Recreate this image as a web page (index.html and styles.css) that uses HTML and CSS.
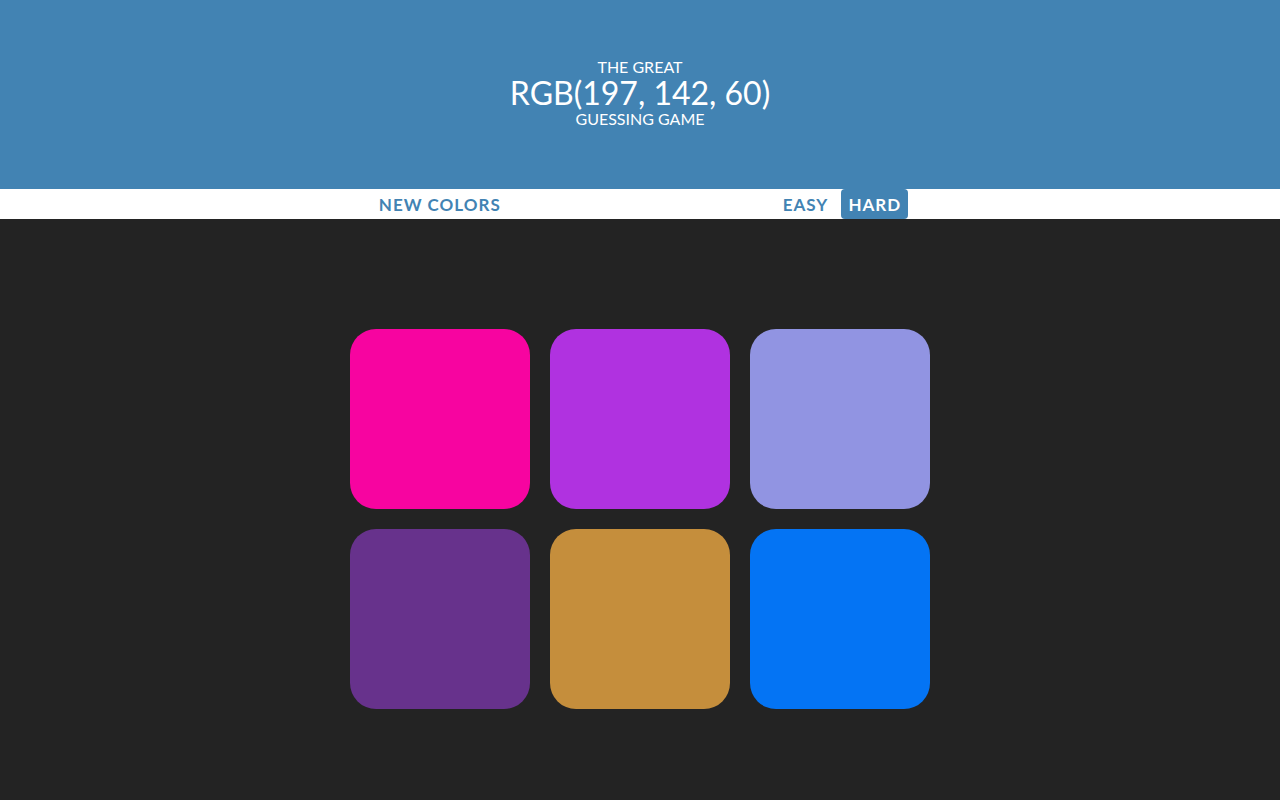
FILE: index.html
```html
<!DOCTYPE html>
<html>
<head>
<meta charset="utf-8">
<title>Color Game</title>
<link rel="stylesheet" href="styles.css">
</head>
<body>
<h1 class="title">
  <span class="title-line">The Great</span>
  <span class="title-rgb">RGB(197, 142, 60)</span>
  <span class="title-line">Guessing Game</span>
</h1>
<div class="stripe">
  <button class="btn btn-reset">New Colors</button>
  <span class="message"></span>
  <button class="btn btn-mode">Easy</button>
  <button class="btn btn-mode selected">Hard</button>
</div>
<div class="board">
  <div class="square sq1"></div>
  <div class="square sq2"></div>
  <div class="square sq3"></div>
  <div class="square sq4"></div>
  <div class="square sq5"></div>
  <div class="square sq6"></div>
</div>
</body>
</html>
```
FILE: styles.css
```css
html, body {
  margin: 0;
  padding: 0;
}
body {
  background: #232323;
  font-family: "Lato", "Open Sans", sans-serif;
  height: 800px;
}
.title {
  margin: 0;
  height: 189px;
  padding-bottom: 3px;
  box-sizing: border-box;
  background: #4283b3;
  color: #fff;
  font-weight: normal;
  text-transform: uppercase;
  display: flex;
  flex-direction: column;
  align-items: center;
  justify-content: center;
}
.title-line {
  font-size: 16px;
  line-height: 18px;
}
.title-rgb {
  font-size: 32px;
  line-height: 34px;
}
.stripe {
  background: #fff;
  height: 30px;
  display: flex;
  justify-content: center;
  align-items: stretch;
}
.btn {
  border: none;
  background: none;
  font-family: inherit;
  text-transform: uppercase;
  font-weight: 700;
  font-size: 17px;
  letter-spacing: 1px;
  color: #4283b3;
  padding: 0 7px;
  margin: 0;
  border-radius: 4px;
  cursor: pointer;
  outline: none;
}
.message {
  width: 268px;
}
.btn-mode + .btn-mode {
  margin-left: 6px;
}
.selected {
  background: #4283b3;
  color: #fff;
}
.board {
  width: 600px;
  margin: 110px auto 0;
  display: grid;
  grid-template-columns: repeat(3, 180px);
  gap: 20px;
  justify-content: center;
}
.square {
  width: 180px;
  height: 180px;
  border-radius: 26px;
}
.sq1 { background: rgb(247, 4, 160); }
.sq2 { background: rgb(176, 50, 224); }
.sq3 { background: rgb(145, 148, 226); }
.sq4 { background: rgb(103, 50, 140); }
.sq5 { background: rgb(197, 142, 60); }
.sq6 { background: rgb(4, 116, 244); }
```
